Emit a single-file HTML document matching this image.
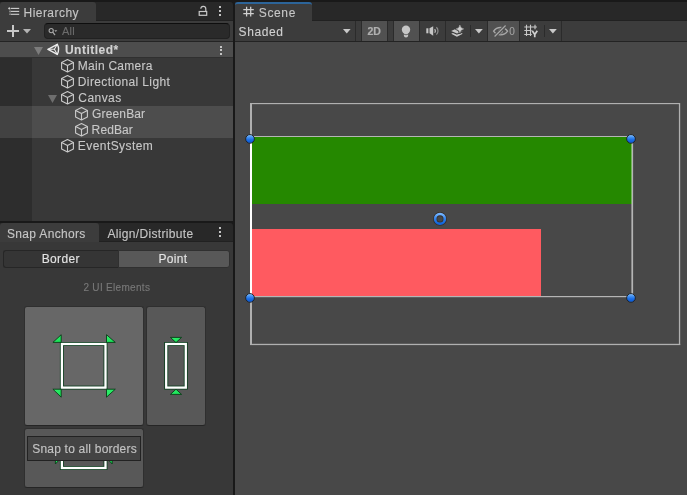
<!DOCTYPE html>
<html>
<head>
<meta charset="utf-8">
<title>Unity - Snap Anchors</title>
<style>
*{box-sizing:border-box;margin:0;padding:0}
html,body{width:687px;height:495px;overflow:hidden;background:#191919}
body{position:relative;font-family:"Liberation Sans",sans-serif;font-size:12px;color:#c8c8c8}
#root{position:absolute;left:0;top:0;width:687px;height:495px;will-change:transform}
.a{position:absolute}
.t{-webkit-text-stroke:0.12px currentColor;position:absolute;white-space:nowrap;line-height:14px;height:14px}
svg{position:absolute;overflow:visible}
/* panels */
#hier-tabs{left:0;top:2px;width:233px;height:19px;background:#282828;border-top-right-radius:3px;border-bottom:1px solid #212121}
#hier-tab{left:0;top:2px;width:96px;height:20px;background:#3c3c3c;border-top-left-radius:3px;border-top-right-radius:3px}
#hier-bar{left:0;top:21px;width:233px;height:20px;background:#3c3c3c}
#hier-line{left:0;top:41px;width:233px;height:1px;background:#242424}
#hier-body{left:0;top:42px;width:233px;height:179px;background:#383838}
#hier-gut{left:0;top:42px;width:32px;height:179px;background:#2d2d2d}
#search{left:43.5px;top:23px;width:186px;height:16px;background:#2a2a2a;border:1px solid #212121;border-top-color:#0e0e0e;border-radius:4px}
.row{left:0;width:233px;height:16px}
#snap-tabs{left:0;top:223px;width:233px;height:19px;background:#282828;border-top-right-radius:3px;border-bottom:1px solid #212121}
#snap-tab{left:0;top:223px;width:99px;height:19px;background:#3c3c3c;border-top-left-radius:3px;border-top-right-radius:3px}
#snap-body{left:0;top:242px;width:233px;height:253px;background:#383838}
#scene-tabs{left:235px;top:2px;width:452px;height:19px;background:#282828;border-bottom:1px solid #212121}
#scene-tab{left:235px;top:2px;width:77px;height:20px;background:#3c3c3c;border-top:2px solid #2c6499;border-top-left-radius:3px;border-top-right-radius:3px}
#scene-bar{left:235px;top:21px;width:452px;height:20px;background:#3c3c3c}
#scene-line{left:235px;top:41px;width:452px;height:1px;background:#232323}
#scene-view{left:235px;top:42px;width:452px;height:453px;background:#484848}
.vs{top:21px;width:1px;height:20px;background:#2b2b2b}
.on{top:21px;height:20px;background:#515151}
.btn{border:1px solid #2f2f2f;border-bottom-color:#252525;border-radius:3px}
</style>
</head>
<body>
<div id="root">

<!-- ================= HIERARCHY ================= -->
<div class="a" id="hier-tabs"></div>
<div class="a" id="hier-tab"></div>
<div class="a" id="hier-bar"></div>
<div class="a" id="hier-line"></div>
<div class="a" id="hier-body"></div>
<div class="a" id="hier-gut"></div>

<!-- hierarchy tab icon -->
<svg style="left:8px;top:7px" width="12" height="9" viewBox="0 0 12 9">
  <g fill="#d0d0d0">
    <rect x="2.9" y="0.85" width="8.3" height="1.1"/>
    <rect x="2.9" y="3.85" width="8.3" height="1.1"/>
    <rect x="2.9" y="6.75" width="8.3" height="1.1"/>
    <rect x="0.2" y="0.9" width="2.2" height="1"/>
    <rect x="0.8" y="0.3" width="1" height="2.2"/>
    <rect x="1.5" y="3.9" width="1" height="1"/>
    <rect x="1.5" y="6.8" width="1" height="1"/>
  </g>
  <rect x="1.7" y="2.4" width="0.7" height="5.2" fill="#8a8a8a"/>
</svg>
<div class="t" id="tx-hier" style="letter-spacing:0.447px;left:23.59px;top:6px;color:#c6c6c6">Hierarchy</div>

<!-- lock -->
<svg style="left:198px;top:5px" width="10" height="12" viewBox="0 0 10 12">
  <path d="M2.8 3.7 A2.5 2.5 0 0 1 7.8 4 V6.2" fill="none" stroke="#c8c8c8" stroke-width="1.2"/>
  <rect x="1.2" y="6.5" width="7.5" height="3.8" fill="none" stroke="#c8c8c8" stroke-width="1.2"/>
</svg>
<!-- kebab -->
<div class="a" style="left:219px;top:6px;width:2px;height:2px;background:#c4c4c4"></div>
<div class="a" style="left:219px;top:10px;width:2px;height:2px;background:#c4c4c4"></div>
<div class="a" style="left:219px;top:14px;width:2px;height:2px;background:#c4c4c4"></div>

<!-- toolbar: plus, dropdown, search -->
<svg style="left:7px;top:25px" width="12" height="12" viewBox="0 0 12 12">
  <path d="M6 0V12M0 6H12" stroke="#c8c8c8" stroke-width="2" fill="none"/>
</svg>
<svg style="left:23px;top:29px" width="8" height="5" viewBox="0 0 8 5"><path d="M0 0H8L4 4.5Z" fill="#b4b4b4"/></svg>
<div class="a" id="search"></div>
<svg style="left:47.5px;top:27px" width="10" height="10" viewBox="0 0 10 10">
  <circle cx="3.2" cy="3.6" r="2.1" fill="none" stroke="#a8a8a8" stroke-width="1.1"/>
  <path d="M4.7 5.2L7 8" stroke="#a8a8a8" stroke-width="1.2" fill="none"/>
  <path d="M6.3 3.2H9.3L7.8 5Z" fill="#a8a8a8"/>
</svg>
<div class="t" id="tx-all" style="left:61.9px;top:24px;font-size:11px;letter-spacing:0.25px;color:#6c6c6c">All</div>

<!-- rows -->
<div class="a row" style="top:42px;height:15px;background:#4d4d4d"></div>
<div class="a" style="left:0;top:57px;width:233px;height:1px;background:#303030"></div>
<div class="a row" style="top:106px;height:32px;background:#4d4d4d"></div>
<div class="a" style="left:0;top:106px;width:32px;height:32px;background:#424242"></div>

<!-- Untitled row -->
<svg style="left:34px;top:47px" width="9" height="8" viewBox="0 0 9 8"><path d="M0 0H9L4.5 8Z" fill="#7c7c7c"/></svg>
<svg style="left:47px;top:43px" width="13" height="13" viewBox="0 0 13 13">
  <g fill="none" stroke="#ececec" stroke-linejoin="round" stroke-linecap="round">
    <path d="M1 6.3 L10.3 1.3 Q12.9 6.3 10.3 11.4 Z" stroke-width="1.4"/>
    <path d="M7.4 6.3 L1 6.3 M7.4 6.3 L10.3 1.3 M7.4 6.3 L10.3 11.4" stroke-width="1.05"/>
  </g>
</svg>
<div class="t" id="tx-untitled" style="letter-spacing:0.504px;left:64.88px;top:43px;font-weight:bold;color:#d2d2d2">Untitled*</div>
<div class="a" style="left:220px;top:45.5px;width:2.2px;height:2px;background:#c4c4c4"></div>
<div class="a" style="left:220px;top:49.4px;width:2.2px;height:2px;background:#c4c4c4"></div>
<div class="a" style="left:220px;top:53.2px;width:2.2px;height:2px;background:#c4c4c4"></div>

<!-- cube icon template -->
<svg width="0" height="0" style="position:absolute">
  <defs>
    <g id="cube" fill="none" stroke="#cacaca" stroke-width="1.12" stroke-linejoin="round">
      <path d="M6.5 0.6 L12.4 3.4 V10 L6.5 13 L0.6 10 V3.4 Z"/>
      <path d="M0.6 3.4 L6.5 6.4 L12.4 3.4 M6.5 6.4 V13"/>
    </g>
  </defs>
</svg>

<svg style="left:61px;top:59.4px" width="13" height="14"><use href="#cube"/></svg>
<div class="t" id="tx-main" style="letter-spacing:0.261px;left:77.81px;top:59px">Main Camera</div>

<svg style="left:61px;top:75.4px" width="13" height="14"><use href="#cube"/></svg>
<div class="t" id="tx-dir" style="letter-spacing:0.375px;left:77.81px;top:75px">Directional Light</div>

<svg style="left:48px;top:95px" width="9" height="8" viewBox="0 0 9 8"><path d="M0 0H9L4.5 7.9Z" fill="#6e6e6e"/></svg>
<svg style="left:61px;top:91.4px" width="13" height="14"><use href="#cube"/></svg>
<div class="t" id="tx-canvas" style="letter-spacing:0.449px;left:78.32px;top:91px">Canvas</div>

<svg style="left:75px;top:107.4px" width="13" height="14"><use href="#cube"/></svg>
<div class="t" id="tx-green" style="letter-spacing:0.140px;left:92.12px;top:107px">GreenBar</div>

<svg style="left:75px;top:123.4px" width="13" height="14"><use href="#cube"/></svg>
<div class="t" id="tx-red" style="letter-spacing:0.101px;left:91.62px;top:123px">RedBar</div>

<svg style="left:61px;top:139.4px" width="13" height="14"><use href="#cube"/></svg>
<div class="t" id="tx-event" style="letter-spacing:0.435px;left:77.81px;top:139px">EventSystem</div>

<!-- ================= SNAP ANCHORS ================= -->
<div class="a" id="snap-tabs"></div>
<div class="a" id="snap-tab"></div>
<div class="a" id="snap-body"></div>
<div class="t" id="tx-snap" style="letter-spacing:0.326px;left:6.99px;top:227px;color:#c6c6c6">Snap Anchors</div>
<div class="t" id="tx-align" style="letter-spacing:0.332px;left:107.41px;top:227px;color:#c6c6c6">Align/Distribute</div>
<div class="a" style="left:219px;top:227px;width:2px;height:2px;background:#c4c4c4"></div>
<div class="a" style="left:219px;top:231px;width:2px;height:2px;background:#c4c4c4"></div>
<div class="a" style="left:219px;top:235px;width:2px;height:2px;background:#c4c4c4"></div>

<!-- Border / Point -->
<div class="a" style="left:3px;top:250px;width:116px;height:18px;background:#353535;border:1px solid #262626;border-right:none;border-radius:3px 0 0 3px"></div>
<div class="a" style="left:118px;top:250px;width:112px;height:18px;background:#585858;border:1px solid #303030;border-radius:0 3px 3px 0"></div>
<div class="t" id="tx-border" style="letter-spacing:0.338px;left:41.72px;top:252px;color:#e4e4e4">Border</div>
<div class="t" id="tx-point" style="letter-spacing:0.258px;left:158.61px;top:252px;color:#e4e4e4">Point</div>

<div class="t" id="tx-count" style="letter-spacing:0.307px;left:83.42px;top:281px;font-size:10px;color:#787878">2 UI Elements</div>

<!-- button 1 (hovered) -->
<div class="a btn" style="left:24px;top:306px;width:120px;height:120px;background:#676767"></div>
<!-- button 2 -->
<div class="a btn" style="left:146px;top:306px;width:60px;height:120px;background:#585858"></div>
<!-- button 3 -->
<div class="a btn" style="left:24px;top:428px;width:120px;height:60px;background:#585858"></div>

<svg style="left:0;top:0" width="233" height="495" viewBox="0 0 233 495">
  <defs>
    <linearGradient id="gg" x1="0" y1="0" x2="1" y2="1">
      <stop offset="0" stop-color="#34f070"/><stop offset="1" stop-color="#14e052"/>
    </linearGradient>
  </defs>
  <!-- icon 1: all borders -->
  <g>
    <rect x="61.9" y="344" width="43.6" height="43.6" fill="none" stroke="#0d3f1f" stroke-width="4"/>
    <rect x="61.9" y="344" width="43.6" height="43.6" fill="none" stroke="#ffffff" stroke-width="2.3"/>
    <g fill="url(#gg)" stroke="#083c16" stroke-width="0.9" stroke-linejoin="round">
      <path d="M61.2 342.4 L52.9 342.4 L61.2 334.7 Z"/>
      <path d="M106.5 342.4 L115.3 342.4 L106.5 334.7 Z"/>
      <path d="M61.2 389.2 L52.9 389.2 L61.2 397.2 Z"/>
      <path d="M106.5 389.2 L115.3 389.2 L106.5 397.2 Z"/>
    </g>
  </g>
  <!-- icon 2: vertical -->
  <g>
    <rect x="166.2" y="344" width="19.6" height="43.6" fill="none" stroke="#0d3f1f" stroke-width="4"/>
    <rect x="166.2" y="344" width="19.6" height="43.6" fill="none" stroke="#ffffff" stroke-width="2.3"/>
    <g fill="url(#gg)" stroke="#083c16" stroke-width="0.9" stroke-linejoin="round">
      <path d="M170.4 337.4 H181.6 L176 342.6 Z"/>
      <path d="M170.4 394.4 H181.6 L176 389.2 Z"/>
    </g>
  </g>
  <!-- icon 3: horizontal (mostly hidden by tooltip) -->
  <g>
    <rect x="61.9" y="446.2" width="43.6" height="21.8" fill="none" stroke="#0d3f1f" stroke-width="4"/>
    <rect x="61.9" y="446.2" width="43.6" height="21.8" fill="none" stroke="#ffffff" stroke-width="2.3"/>
    <g fill="url(#gg)" stroke="#083c16" stroke-width="0.9" stroke-linejoin="round">
      <path d="M55.4 452 V464 L61 458 Z"/>
      <path d="M112.2 452 V464 L106.6 458 Z"/>
    </g>
  </g>
</svg>

<!-- tooltip -->
<div class="a" style="left:27px;top:436px;width:114px;height:25px;background:#444444;border:1px solid #222222"></div>
<div class="t" id="tx-tip" style="letter-spacing:0.211px;left:32.19px;top:442px;color:#c4c4c4">Snap to all borders</div>

<!-- ================= SCENE ================= -->
<div class="a" id="scene-tabs"></div>
<div class="a" id="scene-tab"></div>
<div class="a" id="scene-bar"></div>
<div class="a" id="scene-line"></div>
<div class="a" id="scene-view"></div>

<!-- scene tab icon (#) -->
<svg style="left:243px;top:6px" width="11" height="11" viewBox="0 0 11 11">
  <path d="M3.6 0.7V10.4M7.7 0.7V10.4M0.3 3.7H10.8M0.3 7.6H10.8" stroke="#d0d0d0" stroke-width="1.25" fill="none"/>
</svg>
<div class="t" id="tx-scene" style="letter-spacing:0.626px;left:258.82px;top:6px;color:#c6c6c6">Scene</div>
<div class="t" id="tx-shaded" style="letter-spacing:0.580px;left:238.62px;top:25px;color:#d0d0d0">Shaded</div>
<svg style="left:343.3px;top:28.8px" width="8" height="5" viewBox="0 0 8 5"><path d="M0 0H7.6L3.8 4.6Z" fill="#c8c8c8"/></svg>

<div class="a vs" style="left:355px"></div>
<div class="a vs" style="left:361px"></div>
<div class="a on" style="left:362px;width:25px"></div>
<div class="t" id="tx-2d" style="letter-spacing:-0.232px;left:367.54px;top:23.6px;font-size:10.5px;font-weight:bold;-webkit-text-stroke:0.2px #b0b0b0;color:#b0b0b0">2D</div>
<div class="a vs" style="left:387px"></div>
<div class="a vs" style="left:393px"></div>
<div class="a on" style="left:394px;width:25px"></div>
<!-- bulb -->
<svg style="left:401px;top:24.7px" width="10" height="13" viewBox="0 0 10 13">
  <circle cx="5" cy="4.8" r="4.2" fill="#c6c6c6"/>
  <path d="M2.9 8 H7.1 V10.5 A2.1 2.1 0 0 1 2.9 10.5 Z" fill="#c6c6c6"/>
  <path d="M2.6 9.1 Q5 10.5 7.4 9.1" stroke="#515151" stroke-width="0.8" fill="none"/>
</svg>
<div class="a vs" style="left:419px"></div>
<!-- audio -->
<svg style="left:425.6px;top:25.6px" width="13" height="10" viewBox="0 0 13 10">
  <rect x="0.3" y="2.3" width="2.1" height="5" fill="#c6c6c6"/>
  <path d="M3.5 2.3 L7.2 0.2 V9.7 L3.5 7.3 Z" fill="#c6c6c6"/>
  <path d="M8.6 3.3 A2.2 2.2 0 0 1 8.6 6.6" stroke="#c6c6c6" stroke-width="1.2" fill="none"/>
  <path d="M10.4 1.3 A5 5 0 0 1 10.4 8.6" stroke="#8e8e8e" stroke-width="1.2" fill="none"/>
</svg>
<div class="a vs" style="left:445px"></div>
<!-- fx -->
<svg style="left:450.5px;top:24.6px" width="13" height="12" viewBox="0 0 13 12">
  <path d="M0.2 5.9 L6 3.2 L11.7 5.9 L6 8.5 Z" fill="#c8c8c8"/>
  <path d="M0.2 8.7 L1.9 7.9 L5.9 9.8 L10 7.9 L11.8 8.7 L5.9 11.7 Z" fill="#c8c8c8"/>
  <path d="M8.9 0 Q9.4 3.4 12.7 3.9 Q9.4 4.4 8.9 7.8 Q8.4 4.4 5.1 3.9 Q8.4 3.4 8.9 0Z" fill="#3c3c3c" stroke="#3c3c3c" stroke-width="2.2" stroke-linejoin="round"/>
  <path d="M8.9 0 Q9.4 3.4 12.7 3.9 Q9.4 4.4 8.9 7.8 Q8.4 4.4 5.1 3.9 Q8.4 3.4 8.9 0Z" fill="#cfcfcf" stroke="#cfcfcf" stroke-width="0.4" stroke-linejoin="round"/>
</svg>
<div class="a" style="left:470px;top:25px;width:1px;height:12px;background:#2b2b2b"></div>
<svg style="left:475px;top:28.8px" width="8" height="5" viewBox="0 0 8 5"><path d="M0 0H7.8L3.9 4.6Z" fill="#c8c8c8"/></svg>
<div class="a vs" style="left:487px"></div>
<div class="a on" style="left:488px;width:31px"></div>
<!-- hidden eye -->
<svg style="left:492.5px;top:24.6px" width="15" height="12" viewBox="0 0 15 12">
  <path d="M0.6 6.2 C2.6 3.2 5.4 2.5 7.6 2.5 C10.2 2.5 12.8 3.6 14.6 6.2 C12.8 8.8 10.2 9.8 7.6 9.8 C5 9.8 2.4 8.8 0.6 6.2Z" fill="none" stroke="#a8a8a8" stroke-width="1.3"/>
  <circle cx="7.6" cy="6.2" r="2" fill="none" stroke="#a4a4a4" stroke-width="1"/>
  <path d="M1.2 12 L13 0.2" stroke="#515151" stroke-width="3.4"/>
  <path d="M1.6 11.5 L12.6 0.5" stroke="#a8a8a8" stroke-width="1.2"/>
</svg>
<div class="t" id="tx-zero" style="letter-spacing:0.000px;left:509.3px;top:25px;font-size:10px;color:#a2a2a2">0</div>
<div class="a vs" style="left:519px"></div>
<!-- grid Y -->
<svg style="left:524px;top:24px" width="14" height="14" viewBox="0 0 14 14">
  <path d="M2.5 0.7V12.1M6.5 0.7V12.1M11 0.7V5.2M0.3 3H12.9M0.3 6.5H7.6M0.3 10.5H7.8" stroke="#c8c8c8" stroke-width="1.1" fill="none"/>
  <path d="M8.2 6.7 L10.75 10.4 L13.3 6.7 M10.75 9.8 V13.3" stroke="#d0d0d0" stroke-width="1.7" fill="none"/>
</svg>
<div class="a" style="left:544px;top:25px;width:1px;height:12px;background:#2b2b2b"></div>
<svg style="left:549.3px;top:28.8px" width="8" height="5" viewBox="0 0 8 5"><path d="M0 0H7.8L3.9 4.6Z" fill="#c8c8c8"/></svg>
<div class="a vs" style="left:561px"></div>

<!-- scene content -->
<svg style="left:0;top:0" width="687" height="495" viewBox="0 0 687 495">
  <defs>
    <linearGradient id="bg1" x1="0" y1="0" x2="0" y2="1">
      <stop offset="0" stop-color="#96caff"/><stop offset="0.28" stop-color="#4a96f2"/><stop offset="0.6" stop-color="#1a6ee6"/><stop offset="0.88" stop-color="#0c5cd8"/><stop offset="1" stop-color="#3a86ee"/>
    </linearGradient>
    <linearGradient id="bg2" x1="0" y1="0" x2="0" y2="1">
      <stop offset="0" stop-color="#74b4ff"/><stop offset="0.5" stop-color="#2f80ea"/><stop offset="1" stop-color="#1166de"/>
    </linearGradient>
  </defs>
  <!-- canvas outline -->
  <g fill="#b0b0b0">
    <rect x="250" y="103" width="2" height="242"/>
    <rect x="250" y="103" width="430" height="1.15"/>
    <rect x="678.9" y="103" width="1.3" height="242"/>
    <rect x="250" y="343.8" width="430.2" height="1.3"/>
  </g>
  <!-- bars -->
  <rect x="252" y="137" width="380" height="67" fill="#258800"/>
  <rect x="252" y="229" width="289" height="67" fill="#ff5a60"/>
  <!-- selection rect -->
  <g fill="#ffffff" fill-opacity="0.6">
    <rect x="252" y="136" width="381" height="1"/>
    <rect x="252" y="296" width="381" height="1.2"/>
    <rect x="631.4" y="137" width="1.7" height="159"/>
  </g>
  <rect x="250" y="138" width="2" height="160" fill="#ffffff"/>
  <!-- pivot -->
  <circle cx="440" cy="218.9" r="4.85" fill="none" stroke="#342f2c" stroke-width="4.2"/>
  <circle cx="440" cy="218.9" r="4.85" fill="none" stroke="url(#bg2)" stroke-width="2.65"/>
  <!-- handles -->
  <g stroke="#1c1c1c" stroke-width="0.9" fill="url(#bg1)">
    <circle cx="250" cy="138.9" r="4.35"/>
    <circle cx="631" cy="138.9" r="4.35"/>
    <circle cx="250" cy="297.9" r="4.35"/>
    <circle cx="631" cy="297.9" r="4.35"/>
  </g>
</svg>

</div>
</body>
</html>
